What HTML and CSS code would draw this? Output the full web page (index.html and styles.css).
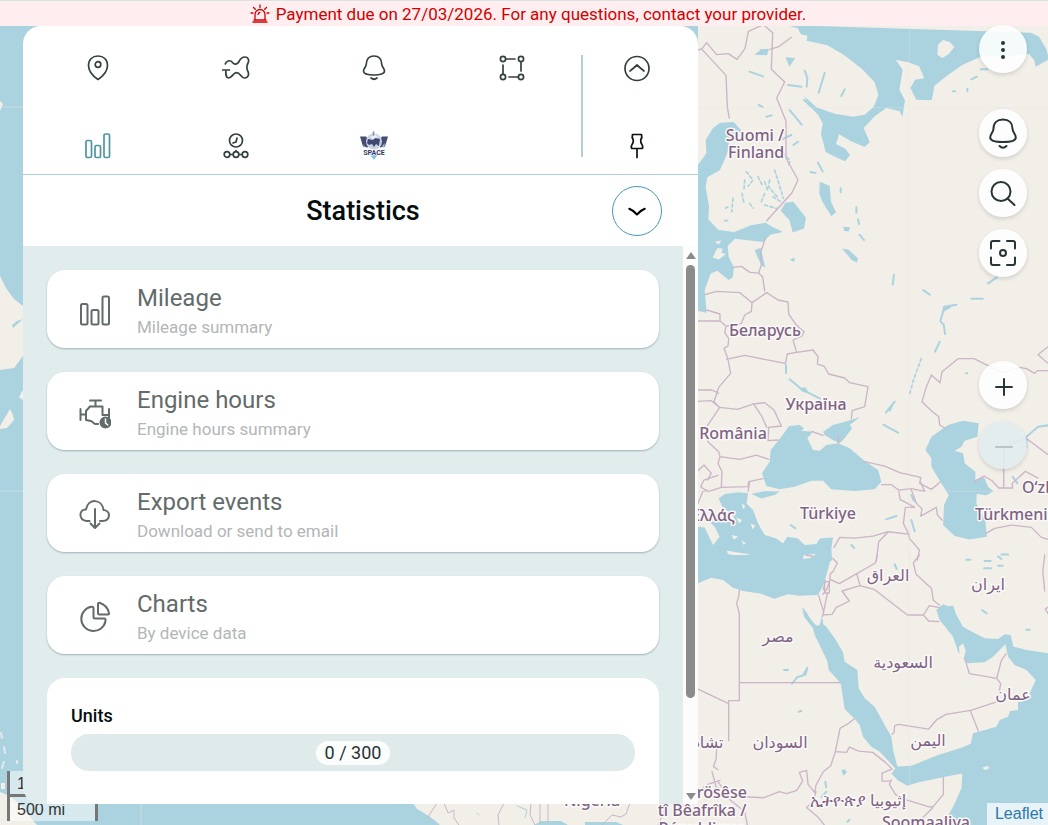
FILE: index.html
```html
<!DOCTYPE html>
<html lang="en">
<head>
<meta charset="utf-8">
<meta name="viewport" content="width=device-width, initial-scale=1">
<title>Statistics</title>
<link rel="stylesheet" href="styles.css">
</head>
<body>
<svg class="map" viewBox="0 0 1048 825" preserveAspectRatio="xMaxYMin slice" aria-label="Map">
  <rect class="sea" width="1048" height="825"/>
  <rect class="land" x="698" width="350" height="825"/>
  <!-- Western coast -->
  <path class="land" d="M0 101l3 3-3 7zM0 276L6 288L14 299L23 306V356L14 368L0 370zM10 409l3 6 1 5-7 8-7 1v-3zM24 388v13l-5-4zM0 792c9 3 16 8 23 17l14 16H0zM1 783h4v6H1z"/>
  <path class="speck" d="M1 733l1 5M4 747l1 6M4 762l-2 6M17 761v2"/>
  <path class="lake" d="M23 319l-10 9-1-3 5-4z"/>
  <path class="grid" d="M0 107h23M0 491h23M141 804v21"/>
  <!-- Gulf of Guinea -->
  <path class="land" d="M413 803l4 6 7 4 9 6 7 6h145v-3h31l7 3h75v-22z"/>
  <path class="sea" d="M534 825l7-4h20l7 4z"/>
  <path class="border" d="M437 803l-9 14M444 803l4 10 6-3 0 8 5 7M504 803l-6 12 1 10M531 803l-1 12 5 10M540 803v20M548 803v20M602 825l10-10 9 2 5-3 4-11M658 825l8-18"/>
  <path class="stream" d="M517 806l10 4-2 8M477 813l2 2"/>
  <!-- Northern Europe -->
  <g transform="translate(698 20) scale(.3334)">
    <path class="sea" d="M262 15l38 10 8 18 20 4-2 15 62 14 50 29 54 42 38 40 11 38-14 35-27 24-35 6-55-9-55-19-37-34 14 28 28 28 14 26-5 32 14 54 28 14 30 14 15-18-14-20-28-14 9-29 36 21 41 17 15-14-18-43 33-35 35-25 40 10 8 17 8-50-17-32 10-60-21-30 38 8 32 12 16 36-28 4-14 25 18 35 46 2 8-44 40-31 42-30 62-28 60 2 80-8 15 18 5 20 18-10 22-12-8-30-22-38-25-12z"/>
    <path class="land" d="M735 60l20 6 14 15-16 20-20 13-15-10 2-30z"/>
    <path class="sea" d="M0 435l25-35-2-40 22-36 22-16 40-2 25 28-36 14-8 52-22 50-38 22-5 30 10 56-2 40 30 32 48 6 50-20 44-8 22 14 30 14-38 8-22 22-84-10-22 22 3 32 16 32-4 30-12 8-34-28-20 8-18 50H0zM262 548l24-3 38 48-6 32-34 12-10-37-26-28zM365 485l30 12 4 48 15 32-14 12-27-44-9-24zM170 690l18-6 14 58-10-4-14-28zM275 718l16-6-3 14zM432 685l20 4 28 26-4 12-16-8zM436 620l20 2-4 12-14-2zM185 88l28-2-6 20-38-2 16-12zM262 112l30 2-18 26z"/>
    <path class="land" d="M44 712l14-28 16 2-4 12 14 4-22 16zM50 665l20-4-8 12z"/>
    <path class="stream" d="M320 152l8 22-2 26M380 158l-18 60M440 208l-10 20M155 155l40 14M310 200l-40-5M318 240l22 20M182 255l12 6M275 270l36 44M205 290l16-4M280 345l-30 14M300 365l-14 10M360 428l14 26M338 456l14 3M428 505v12M475 562v16M480 598l3 14M484 644l14 16M588 764l-4 30M820 178l16-8M870 790l26-18M765 214h6M808 206v8M848 148h20"/>
    <path class="stream scatter" d="M145 455l20 25-14 18M140 480l-2 26M180 470l14 28M200 485l8 24M230 450l14 45 12 40M215 480l-4 20 30 34M190 545l10-25M132 520l6 30M105 535l-4 40M155 550l10 14M80 602h14M225 530l22 14M200 555l35 10M90 560l-14 8M255 400l20 20M275 425l-4 14"/>
    <path class="border" d="M0 90l12-4 14-18 30 36 35-3 26 17 24-32 10-52 45-20 28 24-4 110 40 38-24 48 28 70v110l36 66-18 38-76 84M216 88l26-8 38-28M12 88l72 78 4 95 6 33M202 655l-14 42 2 38-8 24-26-2-26-18-24 3M182 759l12 12 6 42"/>
    <path class="grid" d="M634 18v792M0 263h1050"/>
  </g>
  <!-- Eastern Europe and the Caspian -->
  <g transform="translate(698 290) scale(.3334)">
    <path class="sea" d="M0 0H20L26 68L0 63z"/>
    <path class="sea" d="M273 408L305 405L318 415L310 422L345 425L328 445L345 480L365 482L385 465L420 460L455 475L500 513L540 540L550 575L530 598L470 603L400 598L375 572L340 572L290 590L245 598L205 588L192 550L215 515L218 480L250 440z"/>
    <path class="sea" d="M375 425L405 405L440 395L485 382L455 405L462 415L440 445L425 460L400 448L380 435zM160 612L200 603L245 604L230 615L190 625z"/>
    <path class="sea" d="M700 440L750 405L795 392L842 400L838 440L800 452L790 470L770 482L795 490L800 520L832 545L832 570L858 562L870 590L886 604L865 616L836 612L835 640L862 690L866 740L815 748L770 738L735 705L738 645L752 615L730 580L700 530L700 505L682 480z"/>
    <path class="sea" d="M62 625L80 612L120 607L150 610L146 640L165 660L180 700L200 735L235 745L255 760L268 740L300 745L320 765L355 762L365 745L405 742L400 775L402 812H0V710L20 712L45 765L65 740L50 710L35 695L85 690L110 690L105 670L75 655z"/>
    <path class="land" d="M86 782L140 790L156 792L130 800L90 792zM318 796L354 790L340 802L325 806zM130 640l12 8-6 10zM115 682l18 8-10 10zM158 700l14 6-8 12zM100 735l20 4-12 10zM130 750l14 10-8 4z"/>
    <path class="stream" d="M675 0l20 14M820 26l34 0M775 44l-36 6-12 44 10 10 4 28M725 155l-14 30M590 335l-26 32M556 404l44 24M264 225v24M275 268l36 30 55 28M278 705l14 10M565 688l30-10M640 690l10 34M1050 406l-30 4-35 30M985 450v24M944 560l14 20M910 793h20M460 765l8 8M640 615l8 18M804 250h4"/>
    <path class="stream scatter" d="M670 205l-22 60-14 50"/>
    <path class="lake" d="M304 294l18-2 10 16-18-2zM735 48l26 4-26 14zM568 358l18-12-10 20z"/>
    <path class="border" d="M206 8L240 30L270 36L272 72L295 105L318 125L312 138L285 150L296 187L345 180L360 200L358 222L378 228L392 252L440 264L455 278L510 290L500 350L462 362L460 386M296 187L268 192L262 220L200 208L140 196L86 208M22 14L55 4L126 8L162 38L160 64L140 75L130 100L88 108M162 38L206 8M26 60L66 72V93L84 108L80 128L92 145L90 168L78 175L90 208L98 250L62 292L48 335L65 352L25 412L30 455L62 485L66 500L60 520L72 545L70 592L30 605L8 590L18 570L60 556M0 93H66M0 300H42L62 310M0 334L40 332L65 352L118 358L165 342L200 338L228 360L250 408L212 412L210 452L240 450M168 344L192 380L206 412M66 500L125 508L175 495L212 508M70 592L150 590L152 575L195 566M0 542L18 525L40 550L28 570M0 640L14 605L28 600M155 576L150 604"/>
    <path class="border" d="M341 424l34 12M421 438v22M500 515L560 528L605 548L668 562L665 580L700 598L727 576M551 584H580L602 600L640 596L680 604L668 578M602 600L606 628L650 652L622 652L616 700L632 732L634 745L664 780L658 810M640 600L655 640L672 656L668 678L715 652L718 675L732 690M408 772L425 742L470 744L525 738L570 725L632 732M570 726L542 755L535 810M740 414L725 405L722 380L700 362L672 335L685 290L700 255L726 278L732 245L780 206H828L912 248L965 232L985 236L1010 250L1018 242H1050M1050 170L1034 182L1020 194L1050 220M917 590V470L983 444L1050 494M830 574l28-16 24 14 20 22h42l-2-14 40-36 38 20M864 730L890 715L940 705L1000 712L1030 742L1050 748"/>
    <path class="grid" d="M634 0v810M0 604h1050"/>
  </g>
  <!-- Middle East and North Africa -->
  <g transform="translate(698 555) scale(.3334)">
    <path class="sea" d="M0 0H402L385 60L375 92L360 120L305 122L270 118L228 131L190 116L135 108L105 98L75 75L40 68L0 85z"/>
    <path class="land" d="M318 0h34l-18 10-20 2z"/>
    <path class="sea" d="M735 148L750 154L765 152L775 180L795 215L812 225L860 250L900 252L920 238L938 240L946 275L985 285L1050 295V810H735L770 745L790 700L793 655L737 666L660 682L628 692L600 676L580 655L592 640L545 590L520 575L495 545L485 510L468 490L440 462L428 385L392 345L388 318L350 240L345 220L318 185L312 155L325 172L340 196L355 212L365 210L372 182L376 208L385 215L410 250L435 292L440 320L478 345L482 400L500 430L530 455L560 510L580 545L586 590L598 634L640 632L720 600L790 578L818 566L825 535L895 515L905 495L930 485L936 468L960 465V442L990 425L1013 375L985 345L950 330L930 305L922 268L885 305L860 322L808 325L780 290L765 245L725 195L715 165z"/>
    <path class="land" d="M783 275l12-10 8 22-6 24-12-4zM852 638l14-5 10 6-14 6z"/>
    <path class="stream" d="M282 386l16-20 16-4 14-24-6 22M258 345h12M302 470l8-2M382 680l2 16M385 710l-14 16M448 800l6-6M852 165l14 10M985 224h10M590 28l6 14M805 14h12M858 40h22M900 32h14M860 18h18M900 4l10 8"/>
    <path class="lake" d="M430 646l10-4 6 10-10 10z"/>
    <path class="border" d="M124 105l-2 20-6 20 8 32V437H92v120M124 383h304M0 402l92 44M404 10l14 14-12 24-10 10 0 16-10 30-12 14M382 76l-6 28M398 74l26 12 52-30 56-32 6-24M476 56l10 36 44 12 98 76h48l16 18 30 2M486 92l-54 16 22 30-40 20-12 20-28 2M676 180l18-28 30 6M664 0l-18 24 8 34 46 42 6 36 18 14M362 122l15 50M388 116l-14 68M380 80h14v34h-14zM800 310l14 46 82 14 14-54 14-20M896 370l12 16-10 54-80 26-74 12-28 16-24 28-90-14-12 4-2 20-6 6M816 466l25 62M468 492l-18 14-24 14-14 70-14 42-22 18-22 40-4 22-20-24-4-42-22 6 10 26-18 28-30 10-22-6-46 18-66-3-20-14-36-4-22-12-12-46M56 580l-2 34-8 20 14 10M412 590l34 2 8-16 28 12 42 4 38 30 20 20-30 12v24l24 0M580 674l-6 14 18 30 28 16M622 734l74 22 10-2 30-36v-50M704 758l-32 32M354 710l-8 26-20 22 34 28 24 30M66 676l-36 12-30 20M60 680l36 54 44 36 8 40M1050 156l-8 6 8 14M1040 0l-6 48 6 60M324 1l20 2"/>
    <path class="grid" d="M634 0v810"/>
  </g>
  <g class="labels">
    <text x="755" y="141">Suomi /</text><text x="756" y="158">Finland</text>
    <text x="765" y="336">Беларусь</text><text x="816" y="410">Україна</text>
    <text x="733" y="439">România</text><text x="713" y="521">Ελλάς</text>
    <text x="828" y="519">Türkiye</text><text class="from" x="1022" y="493">O‘zbek</text><text class="from" x="975" y="520">Türkmenistan</text>
    <text x="888" y="581">العراق</text><text x="988" y="590">ایران</text><text x="778" y="642">مصر</text>
    <text x="903" y="668">السعودية</text><text x="1013" y="700">عمان</text><text x="928" y="746">اليمن</text>
    <text x="780" y="748">السودان</text><text x="708" y="748">تشاد</text>
    <text x="702" y="798">Ködörösêse</text><text x="702" y="816">tî Bêafrîka /</text><text x="702" y="834">République</text>
    <text x="858" y="806">ኢትዮጵያ إثيوبيا</text><text x="926" y="828">Soomaaliya</text><text x="592" y="806">Nigeria</text>
  </g>
</svg>

<div class="banner" role="alert">
  <svg class="siren" viewBox="0 0 20 20" aria-hidden="true"><path d="M5 16v-5.500a5 5 0 0 1 10 0V16M3 18h14M4 16h12M8 10.500q.3-1.800 1.800-2M10 1v2.500M3.500 3.500l1.800 1.800M16.500 3.500l-1.800 1.800M1 9h2M17 9h2"/></svg>
  <span>Payment due on 27/03/2026. For any questions, contact your provider.</span>
</div>

<div class="scale" aria-hidden="true"><div class="km">1000 km</div><div class="mi">500 mi</div></div>

<main class="panel">
  <nav class="nav">
    <div class="tabs">
      <button aria-label="Units"><svg viewBox="0 0 28 28"><path d="M14 25.500C11 23.500 4.500 18 4.500 11.500C4.500 5.500 8.500 2 14 2s9.500 3.500 9.500 9.500C23.500 18 17 23.500 14 25.500z"/><circle cx="14" cy="10.500" r="2.800"/></svg></button>
      <button aria-label="Routes"><svg viewBox="0 0 28 28"><path d="M3.300 10C3.800 7.500 8 5 10.500 8.500C12.500 11 15.500 10.500 17 7.500C18.500 4.500 20.500 3 23 3C26 3 27.500 6 26 9C24.500 12 24.500 14 25.500 16.500C27.500 20 26.500 24 22.500 24C19 24 18.500 18.700 14.500 18.700C11 18.700 10 24 6.500 24C3.800 24 3.800 21 3.800 16M0 16H7.500"/></svg></button>
      <button aria-label="Notifications"><svg viewBox="0 0 28 28"><path d="M14 2C9 2 6.500 5.500 6.300 10C6.200 13 3.500 14.500 3.500 17c0 2.500 4 4 10.500 4s10.500-1.500 10.500-4c0-2.500-2.700-4-2.800-7C21.500 5.500 19 2 14 2zM11 24q3 2.500 6 0"/></svg></button>
      <button aria-label="Geofences"><svg viewBox="0 0 28 28"><circle cx="5" cy="5" r="2.600"/><circle cx="23" cy="5" r="2.600"/><circle cx="5" cy="23" r="2.600"/><circle cx="23" cy="23" r="2.600"/><path d="M8 5h9M23 8v9M5 11v9M11 23h9"/></svg></button>
      <button class="active" aria-label="Statistics"><svg viewBox="0 0 28 28"><rect x="2" y="8.500" width="5.500" height="17" rx="1.500"/><rect x="11" y="13.500" width="5.500" height="12" rx="1.500"/><rect x="20" y="2" width="5.500" height="23.500" rx="1.500"/></svg></button>
      <button aria-label="Timeline"><svg viewBox="0 0 28 28"><circle cx="14" cy="8.500" r="6.500"/><path d="M15 6l-1 4-3 1M8 22.500h3M17 22.500h3M14 18.500v1"/><circle cx="5" cy="22.500" r="2.800"/><circle cx="14" cy="22.500" r="2.800"/><circle cx="23" cy="22.500" r="2.800"/></svg></button>
      <button aria-label="Space"><svg class="logo" viewBox="0 0 30 30"><path fill="#474c70" d="M1 5.500h6l3 4-1 7-5-1zM29 5.500h-6l-3 4 1 7 5-1z"/><circle cx="15" cy="10.500" r="8" fill="#c9d3e2"/><path fill="#404773" d="M9 8l5 1 2-2 5 1-1 7-3-2-2 3-2-3-3 1-2-2z"/><path fill="#e8eff5" d="M11 6l5-3 3 3-5 2z"/><path stroke="#8a91ac" d="M14.500 1v3"/><path fill="#86c3e8" d="M10 22h10l-5 7zM23 15l3-3-1 5zM4 13l3 4-2-1z"/><text x="15" y="24">SPACE</text></svg></button>
    </div>
    <div class="tools">
      <button aria-label="Collapse"><svg viewBox="0 0 28 28"><circle cx="14" cy="14.500" r="12"/><path d="M7 17q2-1.500 7-6 5 4.500 7 6"/></svg></button>
      <button class="pin" aria-label="Pin"><svg viewBox="0 0 28 28"><path d="M9.500 2.500h9q1 3-.8 5.500-.3 3 1.500 5 1.200 2.500-.2 3.500H9q-1.400-1-.2-3.500 1.800-2 1.500-5Q8.500 5.500 9.500 2.500zM14 16.500v9"/></svg></button>
    </div>
  </nav>
  <header class="head">
    <h1>Statistics</h1>
    <button class="round" aria-label="Expand"><svg viewBox="0 0 28 28"><path d="M5 11.500q4 1.500 9 6.500 5-5 9-6.500"/></svg></button>
  </header>
  <div class="body">
    <div class="list">
      <button class="card"><svg viewBox="0 0 32 32"><rect x="2" y="9" width="6.500" height="20.500" rx="1.500"/><rect x="12.500" y="15" width="7" height="14.500" rx="1.500"/><rect x="23.500" y="1.500" width="6.500" height="28" rx="1.500"/></svg><span class="text"><span class="name">Mileage</span><span class="note">Mileage summary</span></span></button>
      <button class="card"><svg viewBox="0 0 32 32"><path d="M11 3.500h11M16.500 3.500v6M11 9.500h12.500v8.500H30M30 12v8.500M11 9.500L7 14v9l5 1 4 3h3M7 17.500H1.500M1.500 12v11"/><circle class="solid" cx="26.500" cy="25.500" r="6"/><path class="hands" d="M26.500 22v4l2.200 1.800"/></svg><span class="text"><span class="name">Engine hours</span><span class="note">Engine hours summary</span></span></button>
      <button class="card"><svg viewBox="0 0 32 32"><path d="M10.500 22H7.500C-1 20.500 0 10 7 10.500 9-1 23-.5 24.500 11c7.500.5 7.500 10.500-1 11H21M16 10v18.500M11.500 24.500l4.500 4.500 4.500-4.500"/></svg><span class="text"><span class="name">Export events</span><span class="note">Download or send to email</span></span></button>
      <button class="card"><svg viewBox="0 0 32 32"><path d="M14.500 7.500V16q0 1.500 1.500 1.500h9q2 0 1.500 2.500A12.200 12.200 0 1 1 12.500 5.800q2-.3 2 1.700zM19 3q0-1.500 1.500-1.200A14 14 0 0 1 30 12q.4 1.500-1 1.500h-8.500Q19 13.500 19 12z"/></svg><span class="text"><span class="name">Charts</span><span class="note">By device data</span></span></button>
      <section class="units">
        <h2>Units</h2>
        <div class="meter"><span>0 / 300</span></div>
      </section>
    </div>
    <div class="rail" aria-hidden="true"><i class="up"></i><i class="thumb"></i><i class="down"></i></div>
  </div>
</main>

<div class="controls">
  <button aria-label="Menu"><svg viewBox="0 0 32 32"><g class="solid"><circle cx="16" cy="10" r="2"/><circle cx="16" cy="17" r="2"/><circle cx="16" cy="24" r="2"/></g></svg></button>
  <button class="alerts" aria-label="Alerts"><svg viewBox="0 0 32 32"><path d="M16 2.500C10 2.500 6.500 6 6.500 11.500C6.500 15.500 3.200 17 3.200 20.500c0 3 5 4.500 12.800 4.500s12.800-1.500 12.800-4.500c0-3.500-3.300-5-3.300-9C25.500 6 22 2.500 16 2.500zM12.500 29q3.500 3.500 7 0"/></svg></button>
  <button aria-label="Search"><svg viewBox="0 0 32 32"><circle cx="14" cy="14.500" r="9.500"/><path d="M20.500 21.500l7 6.500"/></svg></button>
  <button aria-label="Fit to view"><svg viewBox="0 0 32 32"><path d="M12.500 4H6Q4 4 4 6v5.500M20 4h6q2 0 2 2v5.500M12.500 28H6q-2 0-2-2v-5.500M20 28h6q2 0 2-2v-5.500"/><circle cx="16" cy="16" r="3"/></svg></button>
  <button class="zoom-in" aria-label="Zoom in"><svg viewBox="0 0 32 32"><path d="M9 18h16M17 10v16"/></svg></button>
  <button class="zoom-out" aria-label="Zoom out" disabled><svg viewBox="0 0 32 32"><path d="M9 18h16"/></svg></button>
</div>
<a class="credit" href="#">Leaflet</a>
</body>
</html>
```
FILE: styles.css
```css
* { box-sizing: border-box; }
body {
  margin: 0;
  height: 100vh;
  overflow: hidden;
  display: flex;
  flex-direction: column;
  background: #aad3df;
  font-family: Roboto, "Liberation Sans", sans-serif;
}
button { margin: 0; padding: 0; border: 0; background: none; color: inherit; font: inherit; cursor: pointer; }
svg { display: block; fill: none; stroke: currentColor; stroke-linecap: round; stroke-linejoin: round; }
.solid { fill: currentColor; stroke: none; }

/* Map */
.map { position: absolute; inset: 0; width: 100%; height: 100%; }
.sea, .lake { fill: #aad3df; stroke: none; }
.land { fill: #f2efe9; stroke: none; }
.speck { stroke: #e4ebea; stroke-width: 2; }
.border { stroke: #cbb5c7; stroke-width: 4; }
.stream { stroke: #aad3df; stroke-width: 6; }
.scatter { stroke-width: 5; stroke-dasharray: 9 8; }
.grid { stroke: #e8e8e3; stroke-width: 2; opacity: .5; }
.map > .border, .map > .stream, .map > .grid { stroke-width: 1; }
.labels {
  fill: #7f6384;
  stroke: #fbf9f8;
  stroke-width: 3;
  paint-order: stroke;
  font: 500 16px "Noto Sans", "DejaVu Sans", sans-serif;
  text-anchor: middle;
}
.labels .from { text-anchor: start; }

/* Payment banner */
.banner {
  position: relative;
  z-index: 2;
  display: flex;
  align-items: center;
  justify-content: center;
  gap: 6px;
  height: 26px;
  flex: none;
  padding-left: 8px;
  border-top: 1px solid #dbe3e0;
  background: #ffeeef;
  color: #d00000;
  font-size: 17px;
}
.siren { width: 20px; height: 20px; stroke-width: 1.300; }

/* Panel */
.panel {
  position: relative;
  z-index: 1;
  flex: 1;
  min-height: 0;
  display: flex;
  flex-direction: column;
  width: 675px;
  max-width: calc(100% - 46px);
  margin: 0 0 21px 23px;
  border-radius: 18px 18px 0 18px;
  overflow: hidden;
  background: #fff;
}
.nav { display: flex; padding: 17px 0 3px 6px; border-bottom: 1px solid #b1d0d0; color: #33403f; }
.nav svg { width: 28px; height: 28px; stroke-width: 1.700; }
.tabs { flex: 1; display: grid; grid-template-columns: repeat(4, 1fr); row-gap: 28px; }
.tabs button, .tools button { height: 50px; display: grid; place-items: center; }
.tabs .active { color: #4e959f; }
.nav .logo { width: 30px; height: 30px; stroke: none; }
.logo text { fill: #33395f; stroke: #fff; stroke-width: 1; paint-order: stroke; font: 700 7px Roboto, sans-serif; text-anchor: middle; }
.tools { position: relative; width: 117px; padding-right: 5px; display: grid; row-gap: 28px; }
.tools::before { content: ""; position: absolute; left: 0; top: 12px; bottom: 14px; width: 2px; background: #b1d0d4; }
.tools .pin { color: #0b1111; }
.head { display: grid; grid-template-columns: 86px 1fr 86px; align-items: center; height: 71px; flex: none; padding-left: 5px; }
.head h1 { grid-column: 2; margin: 0; text-align: center; font-size: 27px; font-weight: 500; color: #050d0d; }
.round { width: 50px; height: 50px; display: grid; place-items: center; border: 1px solid #4698b5; border-radius: 50%; color: #000; }
.round svg { width: 24px; height: 24px; stroke-width: 2.500; }

.body { flex: 1; min-height: 0; display: flex; background: #e1eded; }
.list { flex: 1; display: flex; flex-direction: column; gap: 24px; padding: 24px 24px 0; overflow: hidden; }
.card {
  flex: none;
  display: flex;
  align-items: center;
  gap: 26px;
  height: 78px;
  padding: 3px 32px 0;
  border-radius: 18px;
  background: #fff;
  box-shadow: 0 1px 2px #9fb1b8;
  color: #626b6a;
  text-align: left;
}
.card svg { width: 32px; height: 32px; stroke-width: 2; }
.card .hands { stroke: #fff; stroke-width: 1.500; }
.text { display: grid; }
.name { font-size: 24px; line-height: 32px; }
.note { font-size: 17px; line-height: 26px; color: #b2b6b6; }
.units { flex: 1 0 auto; padding: 24px; border-radius: 18px 18px 0 0; background: #fff; }
.units h2 { margin: 0 0 4px; font-size: 18px; line-height: 28px; font-weight: 500; color: #050d0d; }
.meter { display: grid; place-items: center; height: 37px; border-radius: 18px; background: #dfebeb; }
.meter span { padding: 0 9px; border-radius: 12px; background: #fbfdfd; font-size: 18px; line-height: 24px; color: #263232; }
.rail { width: 15px; display: flex; flex-direction: column; align-items: center; padding: 6px 0 4px; background: #fcfcfc; }
.up, .down { border: 5px solid transparent; }
.up { border-top: 0; border-bottom: 7px solid #8b8b8b; }
.down { margin-top: auto; border-bottom: 0; border-top: 7px solid #8b8b8b; }
.thumb { width: 9px; height: 79%; margin-top: 6px; margin-bottom: 4px; border-radius: 5px; background: #8b8b8b; }

/* Controls floating over the map */
.controls { position: absolute; right: 21px; top: 25px; z-index: 3; display: flex; flex-direction: column; gap: 12px; }
.controls button { width: 48px; height: 48px; display: grid; place-items: center; border-radius: 50%; background: #ffffffe0; color: #283536; box-shadow: 0 2px 4px #00000022; }
.controls svg { width: 32px; height: 32px; stroke-width: 2; }
.controls .alerts { margin-top: 24px; }
.controls .zoom-in { margin-top: 72px; }
.controls .zoom-out { background: #e1edede0; color: #b7c7c8; }
.scale {
  position: absolute;
  left: 7px;
  bottom: 4px;
  color: #333;
  font: 16px/26px "Liberation Sans", Arial, sans-serif;
}
.scale div { height: 24px; padding-left: 7px; border: solid #777; border-width: 0 3px; background: #ffffff80; }
.scale .km { width: 144px; height: 26px; border-bottom-width: 3px; }
.scale .mi { width: 91px; }
.credit {
  position: absolute;
  right: 0;
  bottom: 0;
  padding: 0 5px 0 8px;
  background: #ffffffb8;
  color: #2c78aa;
  font: 16px/22px "Liberation Sans", Arial, sans-serif;
  text-decoration: none;
}
```
